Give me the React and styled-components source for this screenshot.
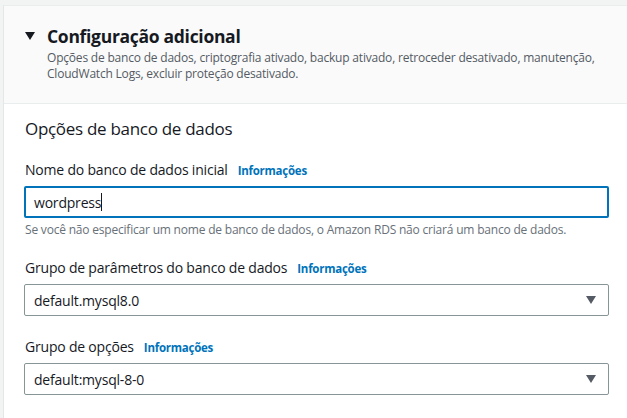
import React from "react";
import styled, { createGlobalStyle } from "styled-components";

const Global = createGlobalStyle`
  html, body { margin: 0; padding: 0; background: #f2f3f3; }
  body { font-family: "Open Sans", "Liberation Sans", sans-serif; }
`;

const Page = styled.div`
  padding: 5px 0 0 3px;
  width: 627px;
  height: 418px;
  box-sizing: border-box;
  overflow: hidden;
`;

const Panel = styled.div`
  background: #ffffff;
  border-left: 1px solid #e4e7e7;
  border-top: 1px solid #eaeded;
  height: 100%;
`;

const Header = styled.div`
  background: #fafafa;
  border-bottom: 1px solid #eaeded;
  padding: 19px 20px 21px 21px;
  display: flex;
  gap: 12px;
`;

const Caret = styled.span`
  flex: none;
  width: 0;
  height: 0;
  border-left: 5px solid transparent;
  border-right: 5px solid transparent;
  border-top: 8px solid #16191f;
  margin-top: 7px;
`;

const Title = styled.h2`
  margin: 0;
  font-size: 17.5px;
  font-weight: 700;
  color: #16191f;
  line-height: 22px;
  letter-spacing: -0.3px;
`;

const Desc = styled.p`
  margin: 3px 0 0;
  font-size: 12px;
  line-height: 16px;
  color: #545b64;
  letter-spacing: -0.2px;
`;

const Body = styled.div`
  padding: 14px 18px 0 20px;
`;

const Section = styled.h3`
  margin: 0 0 20px 1px;
  font-size: 17px;
  font-weight: 400;
  color: #16191f;
  line-height: 22px;
  letter-spacing: -0.3px;
`;

const Field = styled.div`
  margin-bottom: ${(p) => p.$gap || 22}px;
`;

const Label = styled.div`
  display: flex;
  align-items: baseline;
  gap: 10px;
  font-size: 14px;
  color: #16191f;
  line-height: 20px;
  margin: 0 0 5px 1px;
  letter-spacing: -0.2px;
`;

const Info = styled.a`
  font-size: 11.5px;
  font-weight: 700;
  color: #0073bb;
  letter-spacing: -0.25px;
`;

const Input = styled.div`
  height: 32px;
  box-sizing: border-box;
  border: 2px solid #0073bb;
  border-radius: 2px;
  padding: 0 8px;
  display: flex;
  align-items: center;
  font-size: 14px;
  color: #16191f;
  letter-spacing: -0.2px;
`;

const Cursor = styled.span`
  display: inline-block;
  width: 1px;
  height: 18px;
  background: #16191f;
`;

const Hint = styled.div`
  font-size: 12px;
  line-height: 16px;
  color: #687078;
  margin: 4px 0 0 1px;
  letter-spacing: -0.2px;
`;

const Select = styled.div`
  height: 32px;
  box-sizing: border-box;
  border: 1px solid #879596;
  border-radius: 2px;
  padding: 0 12px 0 9px;
  display: flex;
  align-items: center;
  justify-content: space-between;
  font-size: 14px;
  color: #16191f;
  letter-spacing: -0.2px;
`;

const Arrow = styled.span`
  width: 0;
  height: 0;
  border-left: 5px solid transparent;
  border-right: 5px solid transparent;
  border-top: 8px solid #545b64;
`;

export default function App() {
  return (
    <Page>
      <Global />
      <Panel>
        <Header>
          <Caret />
          <div>
            <Title>Configuração adicional</Title>
            <Desc>
              Opções de banco de dados, criptografia ativado, backup ativado, retroceder desativado, manutenção,
              <br />
              CloudWatch Logs, excluir proteção desativado.
            </Desc>
          </div>
        </Header>
        <Body>
          <Section>Opções de banco de dados</Section>
          <Field $gap={20}>
            <Label>
              Nome do banco de dados inicial <Info>Informações</Info>
            </Label>
            <Input>
              wordpress
              <Cursor />
            </Input>
            <Hint>Se você não especificar um nome de banco de dados, o Amazon RDS não criará um banco de dados.</Hint>
          </Field>
          <Field $gap={21}>
            <Label>
              Grupo de parâmetros do banco de dados <Info>Informações</Info>
            </Label>
            <Select>
              default.mysql8.0
              <Arrow />
            </Select>
          </Field>
          <Field>
            <Label>
              Grupo de opções <Info>Informações</Info>
            </Label>
            <Select>
              default:mysql-8-0
              <Arrow />
            </Select>
          </Field>
        </Body>
      </Panel>
    </Page>
  );
}
